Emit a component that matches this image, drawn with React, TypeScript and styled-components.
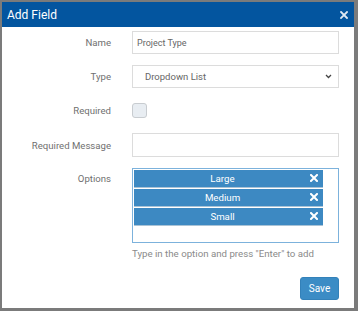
import React from "react";
import styled, { createGlobalStyle } from "styled-components";

const Global = createGlobalStyle`
  html, body { margin: 0; padding: 0; background: #7b7b7b; }
  body { font-family: Roboto, "Liberation Sans", Arial, sans-serif; }
  #root { width: 358px; height: 311px; }
  * { box-sizing: border-box; }
`;

const Dialog = styled.div`
  margin: 2px 4px 0 2px;
  width: 352px;
  height: 306px;
  background: #fff;
  display: flex;
  flex-direction: column;
`;

const TitleBar = styled.div`
  height: 25px;
  background: #03559f;
  color: #fff;
  display: flex;
  align-items: center;
  justify-content: space-between;
  padding: 0 6px 0 5px;
  font-size: 12px;
`;

const CloseBtn = styled.span`
  display: flex;
  align-items: center;
  color: #dfe8f2;
`;

const Body = styled.div`
  display: grid;
  grid-template-columns: 109px 207px;
  column-gap: 21px;
  row-gap: 11px;
  padding: 4px 15px 0 0;
  grid-auto-rows: auto;
`;

const Label = styled.div<{ $h?: number; $top?: boolean }>`
  height: ${(p) => p.$h ?? 23}px;
  display: flex;
  align-items: ${(p) => (p.$top ? "flex-start" : "center")};
  justify-content: flex-end;
  padding-top: ${(p) => (p.$top ? 5 : 0)}px;
  font-size: 9.6px;
  color: #707070;
`;

const TextInput = styled.div<{ $h?: number }>`
  height: ${(p) => p.$h ?? 23}px;
  border: 1px solid #dcdcdc;
  display: flex;
  align-items: center;
  padding-left: 4px;
  font-size: 9px;
  color: #666;
`;

const Select = styled(TextInput)`
  padding-left: 12px;
  padding-right: 6px;
  justify-content: space-between;
  font-size: 9.5px;
`;

const CheckRow = styled.div`
  height: 23px;
  display: flex;
  align-items: center;
`;

const Check = styled.div`
  width: 15px;
  height: 15px;
  border: 1px solid #c8ccd0;
  border-radius: 3px;
  background: #e8edf2;
`;

const OptionsBox = styled.div`
  height: 75px;
  border: 1px solid #7cb2dc;
  padding: 1px 15px 0 1px;
  display: flex;
  flex-direction: column;
  gap: 2px;
`;

const OptionItem = styled.div`
  height: 17px;
  background: #3d89c2;
  color: #fff;
  font-size: 9.7px;
  display: flex;
  align-items: center;
  justify-content: center;
  position: relative;
  padding-right: 12px;
  box-shadow: 0 1px 0 #a9c3d6;
`;

const Remove = styled.span`
  position: absolute;
  right: 5px;
  top: 4px;
  display: flex;
`;

const Hint = styled.div`
  grid-column: 2;
  margin-top: -6px;
  font-size: 9.7px;
  color: #8a8a8a;
`;

const Footer = styled.div`
  grid-column: 2;
  display: flex;
  justify-content: flex-end;
  margin-top: 7px;
`;

const SaveBtn = styled.button`
  width: 39px;
  height: 23px;
  border: 1px solid #3381b9;
  border-radius: 3px;
  background: #3b8cc5;
  color: #fff;
  font-family: inherit;
  font-size: 10px;
  padding: 0;
`;

const X = ({ s = 8, w = 2 }: { s?: number; w?: number }) => (
  <svg width={s} height={s} viewBox="0 0 8 8">
    <path d="M1 1L7 7M7 1L1 7" stroke="currentColor" strokeWidth={w} strokeLinecap="square" />
  </svg>
);

const Chevron = () => (
  <svg width="7" height="5" viewBox="0 0 7 5">
    <path d="M1 1L3.5 3.5L6 1" stroke="#444" strokeWidth="1.3" fill="none" />
  </svg>
);

export default function App() {
  const options = ["Large", "Medium", "Small"];
  return (
    <>
      <Global />
      <Dialog>
        <TitleBar>
          <span>Add Field</span>
          <CloseBtn>
            <X s={8} w={1.8} />
          </CloseBtn>
        </TitleBar>
        <Body>
          <Label>Name</Label>
          <TextInput>Project Type</TextInput>
          <Label>Type</Label>
          <Select>
            <span>Dropdown List</span>
            <Chevron />
          </Select>
          <Label>Required</Label>
          <CheckRow>
            <Check />
          </CheckRow>
          <Label $h={24}>Required Message</Label>
          <TextInput $h={24} />
          <Label $h={75} $top>
            Options
          </Label>
          <OptionsBox>
            {options.map((o) => (
              <OptionItem key={o}>
                {o}
                <Remove>
                  <X s={8} w={2} />
                </Remove>
              </OptionItem>
            ))}
          </OptionsBox>
          <Hint>Type in the option and press "Enter" to add</Hint>
          <Footer>
            <SaveBtn>Save</SaveBtn>
          </Footer>
        </Body>
      </Dialog>
    </>
  );
}
